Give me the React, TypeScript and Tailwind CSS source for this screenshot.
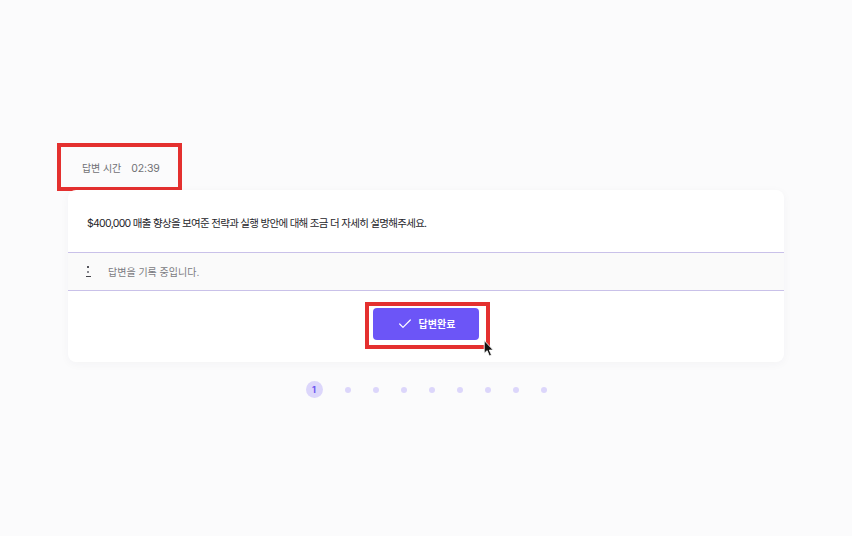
import React from 'react';
import { Check } from 'lucide-react';

const font = "font-['Inter','Noto_Sans_CJK_KR',sans-serif]";

function Pagination() {
  const dots = [2, 3, 4, 5, 6, 7, 8, 9];
  return (
    <div className="mt-[19px] flex items-center justify-center">
      <div className="flex h-[17px] w-[17px] items-center justify-center rounded-full bg-[#dcd6fb] text-[9px] font-bold leading-none text-[#6c55f0]">
        1
      </div>
      {dots.map((d) => (
        <div key={d} className="ml-[22px] h-[6px] w-[6px] rounded-full bg-[#dcd6fb]" />
      ))}
    </div>
  );
}

export default function App() {
  return (
    <div className={`${font} relative h-[536px] w-[852px] overflow-hidden bg-[#fbfbfc] px-[68px] pt-[143px]`}>
      <div className="-ml-[11px] flex h-[48px] w-[125px] items-center gap-[10px] border-4 border-[#e4302f] pt-[3px] pl-[21px] text-[10px] tracking-[-0.1px] text-[#707074]">
        <span>답변 시간</span>
        <span className="text-[10.5px]">02:39</span>
      </div>

      <div className="-mt-px rounded-[8px] bg-white shadow-[0_2px_10px_rgba(40,40,80,0.04)]">
        <div className="flex h-[62px] items-center pt-[5px] pl-[19px] text-[10.5px] tracking-[-0.7px] text-[#26262b]">
          $400,000 매출 향상을 보여준 전략과 실행 방안에 대해 조금 더 자세히 설명해주세요.
        </div>
        <div className="flex h-[39px] items-center border-y border-[#c9c1e9] bg-[#fafafa] pl-[17px] text-[10px] text-[#7b7b82]">
          <div className="flex w-[6px] flex-col items-center gap-[3px]">
            <span className="h-[2px] w-[2px] bg-[#55555c]" />
            <span className="h-[2px] w-[2px] bg-[#8a8a90]" />
            <span className="h-[1px] w-[5px] bg-[#44444a]" />
          </div>
          <span className="ml-[17px] pt-[2px]">답변을 기록 중입니다.</span>
        </div>
        <div className="flex h-[71px] justify-center pt-[11px]">
          <div className="ml-[3px] h-[47px] w-[125px] border-4 border-[#e4302f] px-[4px] pt-[2px]">
            <button className="flex h-[32px] w-[106px] items-center justify-center gap-[6px] rounded-[4px] bg-[#6c55f7] text-[10px] font-bold text-white">
              <Check size={16} strokeWidth={1.8} />
              <span>답변완료</span>
            </button>
          </div>
        </div>
      </div>

      <Pagination />

      {/* mouse pointer */}
      <svg className="absolute left-[483px] top-[340px]" width="12" height="17" viewBox="0 0 11 16">
        <path d="M1 0.5 L1 12.5 L3.8 10 L5.8 15 L7.8 14 L5.8 9.5 L9.5 9.5 Z" fill="#111" stroke="#fff" strokeWidth="0.8" />
      </svg>
    </div>
  );
}
